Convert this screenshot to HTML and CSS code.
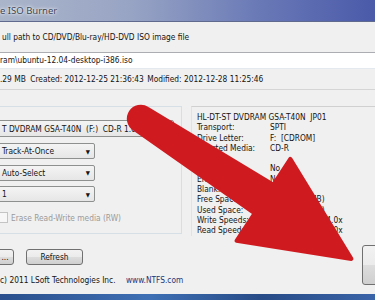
FILE: index.html
```html
<!DOCTYPE html>
<html lang="en">
<head>
    <meta charset="UTF-8">
    <title>Active@ ISO Burner</title>
    <link rel="stylesheet" href="styles.css">
</head>
<body>

    <div class="window">
        <div class="titlebar"><span class="title">e ISO Burner</span></div>

        <div class="label-row">ull path to CD/DVD/Blu-ray/HD-DVD ISO image file</div>
        <div class="path-field">ram\ubuntu-12.04-desktop-i386.iso</div>
        <div class="file-info">
            <span>.29 MB</span>
            <span class="created">Created: 2012-12-25 21:36:43</span>
            <span class="modified">Modified: 2012-12-28 11:25:46</span>
        </div>

        <div class="device-area">
            <div class="options-group">
                <div class="combo drive">T DVDRAM GSA-T40N&nbsp; (F:)&nbsp; CD-R 1.67 MB</div>
                <div class="combo short">Track-At-Once <span class="drop">&#9660;</span></div>
                <div class="combo short">Auto-Select <span class="drop">&#9660;</span></div>
                <div class="combo short">1 <span class="drop">&#9660;</span></div>
                <label class="check disabled"><span class="box"></span>Erase Read-Write media (RW)</label>
            </div>

            <div class="drive-info">
                <div class="model">HL-DT-ST DVDRAM GSA-T40N&nbsp; JP01</div>
                <div class="info-grid">
                    <span>Transport:</span><span>SPTI</span>
                    <span>Drive Letter:</span><span>F:&nbsp; [CDROM]</span>
                    <span>Inserted Media:</span><span>CD-R</span>
                    <span>&nbsp;</span><span></span>
                    <span>Rewritable:</span><span>No</span>
                    <span>Erasable:</span><span>No</span>
                    <span>Blank:</span><span>No</span>
                    <span>Free Space:</span><span>0 bytes (0 MB)</span>
                    <span>Used Space:</span><span>0 bytes (0 MB)</span>
                    <span>Write Speeds:</span><span>48.0x, 32.0x, 24.0x</span>
                    <span>Read Speeds:</span><span>48.0x, 40.0x, 24.0x</span>
                </div>
            </div>
        </div>

        <div class="bottom">
            <div class="bottom-left">
                <div class="buttons">
                    <button class="btn browse">...</button>
                    <button class="btn refresh">Refresh</button>
                </div>
                <div class="footer">
                    <span>c) 2011 LSoft Technologies Inc.</span>
                    <span class="site">www.NTFS.com</span>
                </div>
            </div>
            <button class="btn burn" aria-label="Burn ISO"></button>
        </div>

        <div class="taskbar"></div>
    </div>

    <!-- red pointer drawn over the dialog -->
    <svg class="arrow" viewBox="0 0 375 300" width="375" height="300">
        <g transform="translate(140 120) rotate(33.3)">
            <path d="M0 -13.5 L147 -19 L147 -50 L253 0 L147 48 L147 15 L0 10.5 A12 12 0 0 1 0 -13.5 Z"
                  fill="#cf1b20" stroke="#cf1b20" stroke-width="4" stroke-linejoin="round"/>
        </g>
    </svg>

</body>
</html>
```

FILE: styles.css
```css
body {
    margin: 0;
    width: 375px;
    height: 300px;
    overflow: hidden;
    position: relative;
    background-color: #f0f0f0;
    font-family: "DejaVu Sans Condensed", "DejaVu Sans", sans-serif;
    font-size: 8.3px;
    color: #141414;
}
.window {
    height: 300px;
    display: flex;
    flex-direction: column;
}
.titlebar {
    height: 21px;
    display: flex;
    align-items: center;
    background: linear-gradient(90deg, #aab5ca 0%, #98a4c4 35%, #6878b6 70%, #4b5aa9 100%);
    border-bottom: 1px solid #5f6a8e;
}
.title {
    font-family: "Noto Sans", sans-serif;
    font-size: 9.5px;
    color: #3c4452;
    text-shadow: 0 0 4px #fff, 0 0 2px #fff;
}
.label-row {
    height: 30px;
    display: flex;
    align-items: center;
    padding-left: 2px;
}
.path-field {
    height: 15px;
    line-height: 15px;
    background-color: #fff;
    border-top: 1px solid #abadb3;
    border-bottom: 1px solid #e3e9ef;
}
.file-info {
    height: 20px;
    line-height: 20px;
    border-bottom: 1px solid #d5d5d5;
}
.file-info .created {
    margin-left: 2px;
}
.file-info .modified {
    margin-left: 1px;
}
.device-area {
    display: flex;
    margin-top: 16px;
}
.options-group {
    width: 182px;
    height: 128px;
    flex-shrink: 0;
    padding-top: 13px;
    box-sizing: border-box;
    border-top: 1px solid #d5dfe5;
    border-right: 1px solid #d5dfe5;
    border-bottom: 1px solid #d5dfe5;
}
.combo {
    height: 16px;
    box-sizing: border-box;
    margin-left: -2px;
    padding-left: 3px;
    display: flex;
    align-items: center;
    border: 1px solid #8e8f8f;
    border-radius: 2px;
    background: linear-gradient(#f4f4f4, #e6e6e6);
    white-space: nowrap;
    overflow: hidden;
}
.combo.drive {
    width: 176px;
    height: 17px;
}
.combo.short {
    width: 97px;
    margin-top: 6px;
    justify-content: space-between;
}
.combo.short + .combo.short {
    margin-top: 5.5px;
}
.drop {
    font-size: 6px;
    padding-right: 4px;
}
.check {
    display: flex;
    align-items: center;
    gap: 3px;
    margin-top: 10px;
}
.check.disabled {
    color: #9a9a9a;
}
.check .box {
    width: 12px;
    height: 11px;
    margin-left: -4px;
    box-sizing: border-box;
    border: 1px solid #c4c4c4;
    background-color: #f7f7f7;
}
.drive-info {
    flex: 1;
    margin-left: 9px;
    padding: 5px 0 0 5px;
    border-top: 1px solid #d0d0d0;
    border-left: 1px solid #e2e2e2;
    line-height: 10.3px;
    white-space: nowrap;
}
.info-grid {
    display: grid;
    grid-template-columns: 73px auto;
}
.bottom {
    display: flex;
    justify-content: space-between;
}
.bottom-left {
    padding-top: 13px;
}
.buttons {
    display: flex;
    gap: 12px;
}
.btn {
    font-family: inherit;
    font-size: inherit;
    color: #141414;
    height: 16px;
    padding: 0;
    border: 1px solid #707070;
    border-radius: 3px;
    background: linear-gradient(#f2f2f2 0%, #ebebeb 50%, #dddddd 51%, #cfcfcf 100%);
}
.btn.browse {
    width: 18px;
    margin-left: -4px;
}
.btn.refresh {
    width: 57px;
}
.btn.burn {
    width: 60px;
    height: 40px;
    margin-top: 9px;
    margin-right: -47px;
}
.footer {
    margin-top: 9px;
    height: 12px;
    line-height: 12px;
}
.footer .site {
    margin-left: 8px;
    color: #23367a;
}
.taskbar {
    margin-top: auto;
    height: 6px;
    background: linear-gradient(90deg, #2a4f8c, #3e6fb4 40%, #274b86 70%, #3a64a8);
}
.arrow {
    position: absolute;
    top: 0;
    left: 0;
}
```
